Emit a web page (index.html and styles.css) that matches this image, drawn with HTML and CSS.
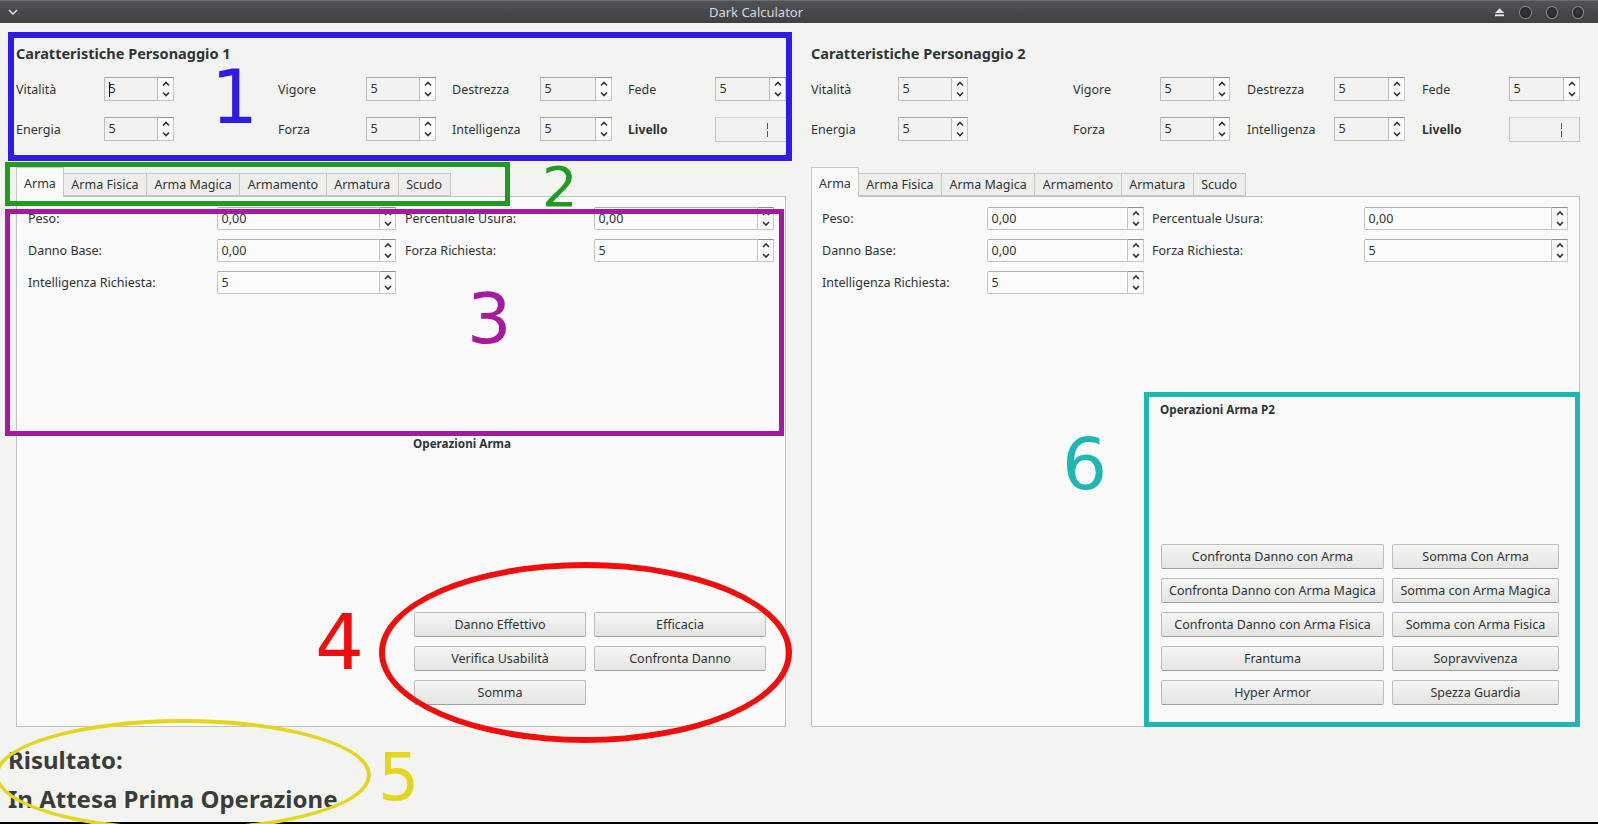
FILE: index.html
```html
<!DOCTYPE html>
<html lang="it">
<head>
<meta charset="utf-8">
<title>Dark Calculator</title>
<link rel="stylesheet" href="styles.css">
</head>
<body>
<div class="window">
  <div class="titlebar">
    <div class="tb-left">
      <svg width="10" height="6" viewBox="0 0 10 6"><path d="M1 1 L5 5 L9 1" fill="none" stroke="#e0e0e0" stroke-width="1.5"/></svg>
    </div>
    <div class="tb-title">Dark Calculator</div>
    <div class="tb-right">
      <svg width="10" height="9" viewBox="0 0 10 9"><path d="M5 0 L10 5 L0 5 Z" fill="#e6e6e6"/><rect x="0" y="6.5" width="10" height="2" fill="#e6e6e6"/></svg>
      <span class="tb-dot"></span>
      <span class="tb-dot"></span>
      <span class="tb-dot"></span>
    </div>
  </div>

  <div class="main">
    <section class="col col-left">
      <div class="chars">
        <h2 class="chars-title">Caratteristiche Personaggio 1</h2>
        <div class="chars-grid grid-left">
          <span class="lbl">Vitalità</span>
          <div class="spin w70"><span class="spin-val"><span class="caret"></span>5</span><span class="spin-btns"><svg width="14" height="22" viewBox="0 0 14 22"><path d="M4 7.5 L7 4.5 L10 7.5 M4 14.5 L7 17.5 L10 14.5" fill="none" stroke="#2e3436" stroke-width="1.6"/></svg></span></div>
          <span class="lbl">Vigore</span>
          <div class="spin w70"><span class="spin-val">5</span><span class="spin-btns"><svg width="14" height="22" viewBox="0 0 14 22"><path d="M4 7.5 L7 4.5 L10 7.5 M4 14.5 L7 17.5 L10 14.5" fill="none" stroke="#2e3436" stroke-width="1.6"/></svg></span></div>
          <span class="lbl">Destrezza</span>
          <div class="spin w72"><span class="spin-val">5</span><span class="spin-btns"><svg width="14" height="22" viewBox="0 0 14 22"><path d="M4 7.5 L7 4.5 L10 7.5 M4 14.5 L7 17.5 L10 14.5" fill="none" stroke="#2e3436" stroke-width="1.6"/></svg></span></div>
          <span class="lbl">Fede</span>
          <div class="spin w71"><span class="spin-val">5</span><span class="spin-btns"><svg width="14" height="22" viewBox="0 0 14 22"><path d="M4 7.5 L7 4.5 L10 7.5 M4 14.5 L7 17.5 L10 14.5" fill="none" stroke="#2e3436" stroke-width="1.6"/></svg></span></div>

          <span class="lbl">Energia</span>
          <div class="spin w70"><span class="spin-val">5</span><span class="spin-btns"><svg width="14" height="22" viewBox="0 0 14 22"><path d="M4 7.5 L7 4.5 L10 7.5 M4 14.5 L7 17.5 L10 14.5" fill="none" stroke="#2e3436" stroke-width="1.6"/></svg></span></div>
          <span class="lbl">Forza</span>
          <div class="spin w70"><span class="spin-val">5</span><span class="spin-btns"><svg width="14" height="22" viewBox="0 0 14 22"><path d="M4 7.5 L7 4.5 L10 7.5 M4 14.5 L7 17.5 L10 14.5" fill="none" stroke="#2e3436" stroke-width="1.6"/></svg></span></div>
          <span class="lbl">Intelligenza</span>
          <div class="spin w72"><span class="spin-val">5</span><span class="spin-btns"><svg width="14" height="22" viewBox="0 0 14 22"><path d="M4 7.5 L7 4.5 L10 7.5 M4 14.5 L7 17.5 L10 14.5" fill="none" stroke="#2e3436" stroke-width="1.6"/></svg></span></div>
          <span class="lbl bold">Livello</span>
          <div class="lcd w72"><span class="lcd-seg"></span><span class="lcd-seg"></span></div>
        </div>
      </div>

      <div class="tabs">
        <span class="tab active">Arma</span>
        <span class="tab">Arma Fisica</span>
        <span class="tab">Arma Magica</span>
        <span class="tab">Armamento</span>
        <span class="tab">Armatura</span>
        <span class="tab">Scudo</span>
      </div>

      <div class="pane pane-left">
        <div class="fields fields-left">
          <span class="lbl">Peso:</span>
          <div class="fspin f179"><span class="fspin-val">0,00</span><span class="fspin-btns"><svg width="14" height="21" viewBox="0 0 14 21"><path d="M4 7 L7 4 L10 7 M4 14 L7 17 L10 14" fill="none" stroke="#2e3436" stroke-width="1.6"/></svg></span></div>
          <span class="lbl">Percentuale Usura:</span>
          <div class="fspin f180"><span class="fspin-val">0,00</span><span class="fspin-btns"><svg width="14" height="21" viewBox="0 0 14 21"><path d="M4 7 L7 4 L10 7 M4 14 L7 17 L10 14" fill="none" stroke="#2e3436" stroke-width="1.6"/></svg></span></div>

          <span class="lbl">Danno Base:</span>
          <div class="fspin f179"><span class="fspin-val">0,00</span><span class="fspin-btns"><svg width="14" height="21" viewBox="0 0 14 21"><path d="M4 7 L7 4 L10 7 M4 14 L7 17 L10 14" fill="none" stroke="#2e3436" stroke-width="1.6"/></svg></span></div>
          <span class="lbl">Forza Richiesta:</span>
          <div class="fspin f180"><span class="fspin-val">5</span><span class="fspin-btns"><svg width="14" height="21" viewBox="0 0 14 21"><path d="M4 7 L7 4 L10 7 M4 14 L7 17 L10 14" fill="none" stroke="#2e3436" stroke-width="1.6"/></svg></span></div>

          <span class="lbl">Intelligenza Richiesta:</span>
          <div class="fspin f179"><span class="fspin-val">5</span><span class="fspin-btns"><svg width="14" height="21" viewBox="0 0 14 21"><path d="M4 7 L7 4 L10 7 M4 14 L7 17 L10 14" fill="none" stroke="#2e3436" stroke-width="1.6"/></svg></span></div>
        </div>
        <div class="ops-area">
          <div class="ops ops-left">
            <div class="ops-title">Operazioni Arma</div>
            <div class="ops-buttons btns-left">
              <button class="btn">Danno Effettivo</button>
              <button class="btn">Efficacia</button>
              <button class="btn">Verifica Usabilità</button>
              <button class="btn">Confronta Danno</button>
              <button class="btn">Somma</button>
            </div>
          </div>
        </div>
      </div>
    </section>

    <section class="col col-right">
      <div class="chars">
        <h2 class="chars-title">Caratteristiche Personaggio 2</h2>
        <div class="chars-grid grid-right">
          <span class="lbl">Vitalità</span>
          <div class="spin w70"><span class="spin-val">5</span><span class="spin-btns"><svg width="14" height="22" viewBox="0 0 14 22"><path d="M4 7.5 L7 4.5 L10 7.5 M4 14.5 L7 17.5 L10 14.5" fill="none" stroke="#2e3436" stroke-width="1.6"/></svg></span></div>
          <span class="lbl">Vigore</span>
          <div class="spin w70"><span class="spin-val">5</span><span class="spin-btns"><svg width="14" height="22" viewBox="0 0 14 22"><path d="M4 7.5 L7 4.5 L10 7.5 M4 14.5 L7 17.5 L10 14.5" fill="none" stroke="#2e3436" stroke-width="1.6"/></svg></span></div>
          <span class="lbl">Destrezza</span>
          <div class="spin w71"><span class="spin-val">5</span><span class="spin-btns"><svg width="14" height="22" viewBox="0 0 14 22"><path d="M4 7.5 L7 4.5 L10 7.5 M4 14.5 L7 17.5 L10 14.5" fill="none" stroke="#2e3436" stroke-width="1.6"/></svg></span></div>
          <span class="lbl">Fede</span>
          <div class="spin w71"><span class="spin-val">5</span><span class="spin-btns"><svg width="14" height="22" viewBox="0 0 14 22"><path d="M4 7.5 L7 4.5 L10 7.5 M4 14.5 L7 17.5 L10 14.5" fill="none" stroke="#2e3436" stroke-width="1.6"/></svg></span></div>

          <span class="lbl">Energia</span>
          <div class="spin w70"><span class="spin-val">5</span><span class="spin-btns"><svg width="14" height="22" viewBox="0 0 14 22"><path d="M4 7.5 L7 4.5 L10 7.5 M4 14.5 L7 17.5 L10 14.5" fill="none" stroke="#2e3436" stroke-width="1.6"/></svg></span></div>
          <span class="lbl">Forza</span>
          <div class="spin w70"><span class="spin-val">5</span><span class="spin-btns"><svg width="14" height="22" viewBox="0 0 14 22"><path d="M4 7.5 L7 4.5 L10 7.5 M4 14.5 L7 17.5 L10 14.5" fill="none" stroke="#2e3436" stroke-width="1.6"/></svg></span></div>
          <span class="lbl">Intelligenza</span>
          <div class="spin w71"><span class="spin-val">5</span><span class="spin-btns"><svg width="14" height="22" viewBox="0 0 14 22"><path d="M4 7.5 L7 4.5 L10 7.5 M4 14.5 L7 17.5 L10 14.5" fill="none" stroke="#2e3436" stroke-width="1.6"/></svg></span></div>
          <span class="lbl bold">Livello</span>
          <div class="lcd w71"><span class="lcd-seg"></span><span class="lcd-seg"></span></div>
        </div>
      </div>

      <div class="tabs">
        <span class="tab active">Arma</span>
        <span class="tab">Arma Fisica</span>
        <span class="tab">Arma Magica</span>
        <span class="tab">Armamento</span>
        <span class="tab">Armatura</span>
        <span class="tab">Scudo</span>
      </div>

      <div class="pane pane-right">
        <div class="fields fields-right">
          <span class="lbl">Peso:</span>
          <div class="fspin f157"><span class="fspin-val">0,00</span><span class="fspin-btns"><svg width="14" height="21" viewBox="0 0 14 21"><path d="M4 7 L7 4 L10 7 M4 14 L7 17 L10 14" fill="none" stroke="#2e3436" stroke-width="1.6"/></svg></span></div>
          <span class="lbl">Percentuale Usura:</span>
          <div class="fspin f204"><span class="fspin-val">0,00</span><span class="fspin-btns"><svg width="14" height="21" viewBox="0 0 14 21"><path d="M4 7 L7 4 L10 7 M4 14 L7 17 L10 14" fill="none" stroke="#2e3436" stroke-width="1.6"/></svg></span></div>

          <span class="lbl">Danno Base:</span>
          <div class="fspin f157"><span class="fspin-val">0,00</span><span class="fspin-btns"><svg width="14" height="21" viewBox="0 0 14 21"><path d="M4 7 L7 4 L10 7 M4 14 L7 17 L10 14" fill="none" stroke="#2e3436" stroke-width="1.6"/></svg></span></div>
          <span class="lbl">Forza Richiesta:</span>
          <div class="fspin f204"><span class="fspin-val">5</span><span class="fspin-btns"><svg width="14" height="21" viewBox="0 0 14 21"><path d="M4 7 L7 4 L10 7 M4 14 L7 17 L10 14" fill="none" stroke="#2e3436" stroke-width="1.6"/></svg></span></div>

          <span class="lbl">Intelligenza Richiesta:</span>
          <div class="fspin f157"><span class="fspin-val">5</span><span class="fspin-btns"><svg width="14" height="21" viewBox="0 0 14 21"><path d="M4 7 L7 4 L10 7 M4 14 L7 17 L10 14" fill="none" stroke="#2e3436" stroke-width="1.6"/></svg></span></div>
        </div>
        <div class="ops-area">
          <div class="ops ops-right">
            <div class="ops-title">Operazioni Arma P2</div>
            <div class="ops-buttons btns-right">
              <button class="btn">Confronta Danno con Arma</button>
              <button class="btn">Somma Con Arma</button>
              <button class="btn">Confronta Danno con Arma Magica</button>
              <button class="btn">Somma con Arma Magica</button>
              <button class="btn">Confronta Danno con Arma Fisica</button>
              <button class="btn">Somma con Arma Fisica</button>
              <button class="btn">Frantuma</button>
              <button class="btn">Sopravvivenza</button>
              <button class="btn">Hyper Armor</button>
              <button class="btn">Spezza Guardia</button>
            </div>
          </div>
        </div>
      </div>
    </section>
  </div>

  <div class="result">
    <div class="result-line">Risultato:</div>
    <div class="result-line">In Attesa Prima Operazione</div>
  </div>
</div>

<div class="ann ann-rect ann-blue"></div>
<div class="ann ann-rect ann-green"></div>
<div class="ann ann-rect ann-magenta"></div>
<div class="ann ann-ellipse ann-red"></div>
<div class="ann ann-ellipse ann-yellow"></div>
<div class="ann ann-rect ann-teal"></div>
<div class="ann ann-num num-1">1</div>
<div class="ann ann-num num-2">2</div>
<div class="ann ann-num num-3">3</div>
<div class="ann ann-num num-4">4</div>
<div class="ann ann-num num-5">5</div>
<div class="ann ann-num num-6">6</div>
</body>
</html>
```

FILE: styles.css
```css
* { box-sizing: border-box; }
html, body { margin: 0; padding: 0; }
body {
  width: 1598px;
  height: 824px;
  background: #000;
  font-family: "Noto Sans", sans-serif;
  font-size: 12.5px;
  color: #2e3436;
  position: relative;
  overflow: hidden;
}

.window {
  height: 822px;
  background: #f3f4f1;
  display: flex;
  flex-direction: column;
}

/* Title bar */
.titlebar {
  height: 23px;
  flex: none;
  background: linear-gradient(#515255, #3f4043);
  border-top: 1px solid #6a6b6e;
  display: flex;
  align-items: center;
  color: #d8d8d8;
  font-size: 13px;
}
.tb-left { width: 26px; display: flex; justify-content: center; }
.tb-title { flex: 1; text-align: center; line-height: 20px; }
.tb-right { width: 112px; display: flex; align-items: center; padding-left: 9px; }
.tb-right svg { margin-right: 15px; }
.tb-dot {
  width: 13px; height: 13px; border-radius: 50%;
  background: radial-gradient(circle at 50% 45%, #3a3a3a, #1f1f1f);
  border: 1.5px solid #8c8c8c;
  margin-right: 14px;
}

/* Main columns */
.main {
  display: flex;
  gap: 25px;
  padding: 21px 18px 0 16px;
  flex: none;
}
.col-left { width: 770px; }
.col-right { width: 769px; }

.chars-title {
  margin: 0;
  font-size: 14.5px;
  font-weight: 700;
  line-height: 18px;
  height: 18px;
}
.chars-grid {
  display: grid;
  grid-auto-rows: 24px;
  row-gap: 16px;
  margin-top: 15px;
  align-items: center;
}
.grid-left { grid-template-columns: 88px 174px 88px 86px 88px 88px 87px 71px; }
.grid-right { grid-template-columns: 87px 175px 87px 87px 87px 88px 87px 71px; }

.lbl { white-space: nowrap; line-height: 17px; }
.bold { font-weight: 700; font-size: 12.2px; }

.spin {
  height: 24px;
  display: flex;
}
.w70 { width: 70px; }
.w71 { width: 71px; }
.w72 { width: 72px; }
.spin-val {
  flex: 1;
  border: 1px solid #bdbfbb;
  border-top-color: #a9aba7;
  background: #f2f3f0;
  padding-left: 3.5px;
  line-height: 22px;
  position: relative;
}
.caret {
  position: absolute;
  left: 4px; top: 4px;
  width: 1px; height: 15px;
  background: #1a1a1a;
}
.spin-btns {
  width: 16px;
  border: 1px solid #c6c8c4;
  border-top-color: #8f918d;
  border-left: none;
  background: #fbfbfb;
  display: flex;
  align-items: center;
  justify-content: center;
}
.lcd {
  height: 25px;
  border: 1px solid #c4c6c2;
  border-top-color: #d5d6d3;
  background: #f1f2ef;
  position: relative;
}
.lcd-seg {
  position: absolute;
  left: 51px;
  width: 1px;
  height: 6px;
  background: #555;
}
.lcd-seg:first-child { top: 5px; }
.lcd-seg:last-child { top: 13px; }

/* Tabs */
.tabs {
  display: flex;
  align-items: flex-end;
  margin-top: 26px;
  height: 29px;
  position: relative;
  z-index: 1;
}
.tab {
  height: 23px;
  padding: 2px 7.5px 0;
  line-height: 17px;
  background: #eeefec;
  border: 1px solid #c6c8c4;
  border-left: none;
  white-space: nowrap;
}
.tab.active {
  height: 30px;
  padding-top: 7px;
  padding-left: 7px;
  padding-right: 7px;
  background: #fafafa;
  border-left: 1px solid #c6c8c4;
  border-bottom: none;
  margin-bottom: -1px;
}

/* Pane */
.pane {
  height: 531px;
  background: #fafafa;
  border: 1px solid #c2c3c0;
  display: flex;
  flex-direction: column;
  padding-top: 10px;
  padding-bottom: 21px;
}
.pane-left { padding-left: 11px; padding-right: 11px; }
.pane-right { padding-left: 10px; padding-right: 11px; }

.fields {
  display: grid;
  grid-auto-rows: 23px;
  row-gap: 9px;
  align-items: center;
}
.fields-left { grid-template-columns: 189px 188px 189px 180px; }
.fields-right { grid-template-columns: 165px 165px 212px 204px; }

.fspin { height: 23px; display: flex; }
.f157 { width: 157px; }
.f179 { width: 179px; }
.f180 { width: 180px; }
.f204 { width: 204px; }
.fspin-val {
  flex: 1;
  border: 1px solid #c3c4c1;
  border-top-color: #b0b1ae;
  border-radius: 2px 0 0 2px;
  background: #fcfcfc;
  padding-left: 3.5px;
  line-height: 21px;
}
.fspin-btns {
  width: 16px;
  border: 1px solid #c9cac7;
  border-top-color: #8f918d;
  border-left: none;
  background: #fbfbfb;
  display: flex;
  align-items: center;
  justify-content: center;
}

/* Operations */
.ops-area { flex: 1; display: flex; }
.ops {
  display: flex;
  flex-direction: column;
  justify-content: space-between;
}
.ops-left { margin-left: 377px; width: 369px; padding: 141px 9px 0 8px; }
.ops-right { margin-left: 330px; width: 416px; padding: 107px 9px 0 8px; }
.ops-title { font-weight: 700; line-height: 16px; font-size: 11.7px; }
.ops-buttons {
  display: grid;
  grid-auto-rows: 25px;
  column-gap: 8px;
  row-gap: 9px;
  margin-left: 1px;
}
.btns-left { grid-template-columns: 172px 172px; }
.btns-right { grid-template-columns: 223px 167px; }
.btn {
  font-family: "Noto Sans", sans-serif;
  font-size: 12.5px;
  color: #2e3436;
  background: linear-gradient(#f6f6f5, #e4e5e3);
  border: 1px solid #bcbdba;
  border-bottom-color: #9fa09d;
  border-radius: 2px;
  padding: 0;
  white-space: nowrap;
  line-height: 23px;
}

/* Result */
.result {
  padding-left: 8px;
  margin-top: 13px;
  font-size: 24px;
  font-weight: 700;
  color: #3a3c3a;
}
.result-line { line-height: 39px; height: 39px; }

/* Annotation overlays */
.ann { position: absolute; pointer-events: none; }
.ann-blue { left: 8px; top: 32px; width: 784px; height: 129px; border: 6px solid #2f1ae6; }
.ann-green { left: 5px; top: 162px; width: 505px; height: 44px; border: 5px solid #1f9c1f; }
.ann-magenta { left: 5px; top: 209px; width: 779px; height: 227px; border: 5px solid #a6199f; }
.ann-teal { left: 1144px; top: 392px; width: 436px; height: 335px; border: 5px solid #1fb7b3; }
.ann-ellipse { border-radius: 50%; }
.ann-red { left: 379px; top: 562px; width: 413px; height: 181px; border: 6px solid #f20d0d; }
.ann-yellow { left: -5px; top: 719px; width: 376px; height: 112px; border: 4px solid #e4d61c; }

.ann-num {
  font-family: "DejaVu Sans", sans-serif;
  line-height: 1;
}
.num-1 { left: 211px; top: 60px; font-size: 74px; color: #2f1ae6; }
.num-2 { left: 542px; top: 159px; font-size: 56px; color: #1f9c1f; }
.num-3 { left: 467px; top: 284px; font-size: 70px; color: #a6199f; }
.num-4 { left: 315px; top: 604px; font-size: 77px; color: #f20d0d; }
.num-5 { left: 378px; top: 745px; font-size: 65px; color: #e4d61c; }
.num-6 { left: 1062px; top: 429px; font-size: 71px; color: #1fb7b3; }
```
